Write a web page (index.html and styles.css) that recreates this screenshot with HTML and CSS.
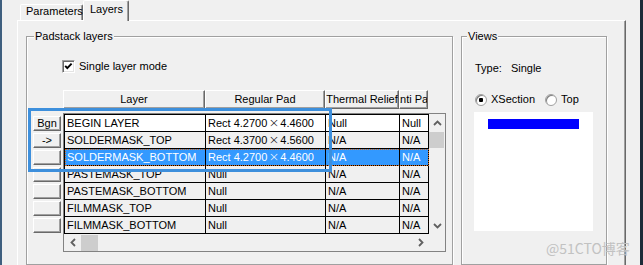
FILE: index.html
```html
<!DOCTYPE html>
<html lang="en">
<head>
    <meta charset="UTF-8">
    <title>Padstack Editor - Layers</title>
    <link rel="stylesheet" href="styles.css">
</head>
<body>
    <div class="frame-left"></div>
    <div class="dialog">
        <div class="tabs">
            <div class="tab">Parameters</div>
            <div class="tab active">Layers</div>
        </div>
        <div class="panel">
            <div class="group padstack">
                <div class="group-title">Padstack layers</div>
                <div class="check-row">
                    <span class="checkbox">
                        <svg width="11" height="11" viewBox="0 0 11 11"><polyline points="2.2,4.8 4.3,7.2 8.6,2.6" fill="none" stroke="#000" stroke-width="1.9"/></svg>
                    </span>
                    <span>Single layer mode</span>
                </div>
                <div class="grid-area">
                    <div class="row-buttons">
                        <div class="btn">Bgn</div>
                        <div class="btn">-&gt;</div>
                        <div class="btn"></div>
                        <div class="btn"></div>
                        <div class="btn"></div>
                        <div class="btn"></div>
                        <div class="btn"></div>
                    </div>
                    <div class="grid">
                        <div class="grid-head">
                            <div class="hcell h1">Layer</div>
                            <div class="hcell h2">Regular Pad</div>
                            <div class="hcell h3">Thermal Relief</div>
                            <div class="hcell h4">Anti Pad</div>
                        </div>
                        <div class="grid-body">
                            <div class="grid-main">
                                <div class="rows">
                                    <div class="row first">
                                        <div class="cell c1">BEGIN LAYER</div>
                                        <div class="cell c2">Rect 4.2700<span class="times">×</span>4.4600</div>
                                        <div class="cell c3">Null</div>
                                        <div class="cell c4">Null</div>
                                    </div>
                                    <div class="row">
                                        <div class="cell c1">SOLDERMASK_TOP</div>
                                        <div class="cell c2">Rect 4.3700<span class="times">×</span>4.5600</div>
                                        <div class="cell c3">N/A</div>
                                        <div class="cell c4">N/A</div>
                                    </div>
                                    <div class="row selected">
                                        <div class="cell c1">SOLDERMASK_BOTTOM</div>
                                        <div class="cell c2">Rect 4.2700<span class="times">×</span>4.4600</div>
                                        <div class="cell c3">N/A</div>
                                        <div class="cell c4">N/A</div>
                                    </div>
                                    <div class="row">
                                        <div class="cell c1">PASTEMASK_TOP</div>
                                        <div class="cell c2">Null</div>
                                        <div class="cell c3">N/A</div>
                                        <div class="cell c4">N/A</div>
                                    </div>
                                    <div class="row">
                                        <div class="cell c1">PASTEMASK_BOTTOM</div>
                                        <div class="cell c2">Null</div>
                                        <div class="cell c3">N/A</div>
                                        <div class="cell c4">N/A</div>
                                    </div>
                                    <div class="row">
                                        <div class="cell c1">FILMMASK_TOP</div>
                                        <div class="cell c2">Null</div>
                                        <div class="cell c3">N/A</div>
                                        <div class="cell c4">N/A</div>
                                    </div>
                                    <div class="row">
                                        <div class="cell c1">FILMMASK_BOTTOM</div>
                                        <div class="cell c2">Null</div>
                                        <div class="cell c3">N/A</div>
                                        <div class="cell c4">N/A</div>
                                    </div>
                                </div>
                                <div class="vscroll">
                                    <div class="sb-arrow">
                                        <svg width="9" height="6" viewBox="0 0 9 6"><polyline points="1,5 4.5,1.5 8,5" fill="none" stroke="#606060" stroke-width="1.8"/></svg>
                                    </div>
                                    <div class="vthumb"></div>
                                    <div class="sb-fill"></div>
                                    <div class="sb-arrow">
                                        <svg width="9" height="6" viewBox="0 0 9 6"><polyline points="1,1 4.5,4.5 8,1" fill="none" stroke="#606060" stroke-width="1.8"/></svg>
                                    </div>
                                </div>
                            </div>
                            <div class="hscroll-row">
                                <div class="hscroll">
                                    <div class="sb-arrow wide">
                                        <svg width="6" height="9" viewBox="0 0 6 9"><polyline points="5,1 1.5,4.5 5,8" fill="none" stroke="#606060" stroke-width="1.8"/></svg>
                                    </div>
                                    <div class="hthumb"></div>
                                    <div class="sb-fill"></div>
                                    <div class="sb-arrow wide">
                                        <svg width="6" height="9" viewBox="0 0 6 9"><polyline points="1,1 4.5,4.5 1,8" fill="none" stroke="#606060" stroke-width="1.8"/></svg>
                                    </div>
                                </div>
                            </div>
                        </div>
                    </div>
                </div>
            </div>
            <div class="group views">
                <div class="group-title views-title">Views</div>
                <div class="type-row"><span>Type:</span><span class="type-val">Single</span></div>
                <div class="radio-row">
                    <span class="radio checked"></span><span>XSection</span>
                    <span class="radio second"></span><span>Top</span>
                </div>
                <div class="preview">
                    <div class="bar"></div>
                </div>
            </div>
        </div>
    </div>
    <div class="frame-right"></div>

    <div class="callout"></div>
    <div class="watermark">@51CTO博客</div>
</body>
</html>
```

FILE: styles.css
```css
* {
    box-sizing: border-box;
}

body {
    margin: 0;
    width: 643px;
    height: 265px;
    overflow: hidden;
    display: flex;
    background: #f0f0f0;
    color: #000;
    font-family: 'Liberation Sans', Arial, sans-serif;
    font-size: 11px;
    line-height: 13px;
}

.frame-left {
    flex: none;
    width: 2px;
    background: #3f5f7f;
}

.frame-right {
    flex: none;
    width: 3px;
    margin-left: auto;
    background: #1d2b38;
}

.dialog {
    flex: none;
    width: 609px;
    margin-left: 15px;
    display: flex;
    flex-direction: column;
}

/* tab strip */
.tabs {
    height: 20px;
    display: flex;
    align-items: flex-end;
    padding-left: 3px;
}

.tab {
    width: 63px;
    height: 16px;
    padding-left: 5px;
    border: 1px solid;
    border-bottom: none;
    border-color: #fff #696969 transparent #fff;
    border-radius: 2px 2px 0 0;
    box-shadow: inset -1px 0 #a0a0a0;
    background: #f0f0f0;
}

.tab.active {
    position: relative;
    width: 46px;
    height: 21px;
    margin-bottom: -1px;
    padding: 2px 0 0 6px;
}

.panel {
    flex: 1;
    display: flex;
    align-items: flex-start;
    gap: 8px;
    padding: 15px 0 0 8px;
    border-top: 1px solid #fff;
    border-left: 1px solid #fff;
    border-right: 1px solid #696969;
    box-shadow: inset -1px 0 #a0a0a0;
}

/* group boxes */
.group {
    flex: none;
    height: 229px;
    border: 1px solid #a0a0a0;
    box-shadow: inset 1px 1px #fff, 1px 1px #fff;
}

.padstack {
    width: 427px;
}

.views {
    width: 146px;
}

.group-title {
    width: max-content;
    margin: -7px 0 0 7px;
    padding: 0 1px;
    background: #f0f0f0;
}

.views-title {
    margin-left: 5px;
}

.check-row {
    display: flex;
    align-items: center;
    height: 13px;
    margin: 17px 0 0 35px;
}

.checkbox {
    width: 13px;
    height: 13px;
    margin-right: 4px;
    border: 1px solid;
    border-color: #a0a0a0 #fff #fff #a0a0a0;
    box-shadow: inset 1px 1px #696969, inset -1px -1px #e3e3e3;
    background: #fff;
}

.checkbox svg {
    display: block;
}

/* layer grid */
.grid-area {
    display: flex;
    margin: 17px 0 0 6px;
}

.row-buttons {
    width: 28px;
    margin-right: 2px;
    padding-top: 26px;
    display: flex;
    flex-direction: column;
    gap: 2px;
}

.btn {
    height: 15px;
    text-align: center;
    border: 1px solid;
    border-color: #fff #696969 #696969 #fff;
    box-shadow: inset -1px -1px #a0a0a0;
}

.grid {
    width: 383px;
}

.grid-head {
    display: flex;
    height: 19px;
    margin-bottom: 4px;
}

.hcell {
    flex: none;
    display: flex;
    justify-content: center;
    align-items: center;
    overflow: hidden;
    white-space: nowrap;
    border: 1px solid;
    border-color: #fff #696969 #696969 #fff;
    box-shadow: inset -1px -1px #a0a0a0;
}

.h1 { width: 142px; }
.h2 { width: 120px; }
.h3 { width: 74px; justify-content: safe center; }
.h4 { width: 29px; }

.grid-body {
    height: 139px;
    border: 1px solid #828282;
}

.grid-main {
    display: flex;
    height: 120px;
}

.rows {
    width: 365px;
    border-left: 1px solid #000;
    border-top: 1px solid #000;
}

.row {
    display: flex;
    height: 17px;
    line-height: 16px;
    border-bottom: 1px solid #000;
    background: #f0f0f0;
}

.row.first {
    background: #fff;
}

.row.selected {
    background: #3399ff;
    color: #fff;
    outline: 1px dotted #d2691e;
    outline-offset: -1px;
}

.cell {
    flex: none;
    padding-left: 2px;
    overflow: hidden;
    white-space: nowrap;
    border-right: 1px solid #000;
}

.c1 { width: 141px; }
.c2 { width: 120px; }
.c3 { width: 74px; }
.c4 { width: 29px; }

.times {
    display: inline-block;
    width: 13px;
    text-align: center;
    font-family: 'DejaVu Sans', sans-serif;
    font-size: 13px;
    font-weight: 200;
}

.vscroll {
    width: 16px;
    display: flex;
    flex-direction: column;
}

.sb-arrow {
    flex: none;
    height: 17px;
    display: flex;
    align-items: center;
    justify-content: center;
}

.sb-arrow.wide {
    width: 17px;
    height: auto;
}

.sb-fill {
    flex: 1;
}

.vthumb {
    width: 15px;
    height: 16px;
    margin-top: 1px;
    background: #cdcdcd;
}

.hscroll-row {
    display: flex;
    height: 17px;
}

.hscroll {
    width: 365px;
    display: flex;
}

.hthumb {
    width: 17px;
    height: 16px;
    margin-top: 1px;
    background: #cdcdcd;
}

/* views group */
.type-row {
    margin: 19px 0 0 13px;
}

.type-val {
    margin-left: 9px;
}

.radio-row {
    display: flex;
    align-items: center;
    height: 13px;
    margin: 18px 0 0 13px;
}

.radio {
    width: 12px;
    height: 12px;
    margin-right: 4px;
    border-radius: 50%;
    border: 1px solid #a0a0a0;
    box-shadow: inset 1px 1px #808080;
    background: #fff;
}

.radio.checked {
    background: radial-gradient(circle, #000 0 2px, #fff 2.5px);
}

.radio.second {
    margin-left: 10px;
}

.preview {
    width: 119px;
    height: 119px;
    margin: 6px 0 0 12px;
    padding: 7px 0 0 14px;
    background: #fff;
}

.bar {
    width: 91px;
    height: 10px;
    background: #0000ff;
}

/* overlays on the screenshot */
.callout {
    position: absolute;
    left: 28px;
    top: 108px;
    width: 304px;
    height: 64px;
    border: 3px solid #3d8fdc;
}

.watermark {
    position: absolute;
    left: 546px;
    top: 239px;
    font-family: 'Noto Sans CJK SC', sans-serif;
    font-size: 14px;
    line-height: 18px;
    color: #c2c2c2;
}
```
